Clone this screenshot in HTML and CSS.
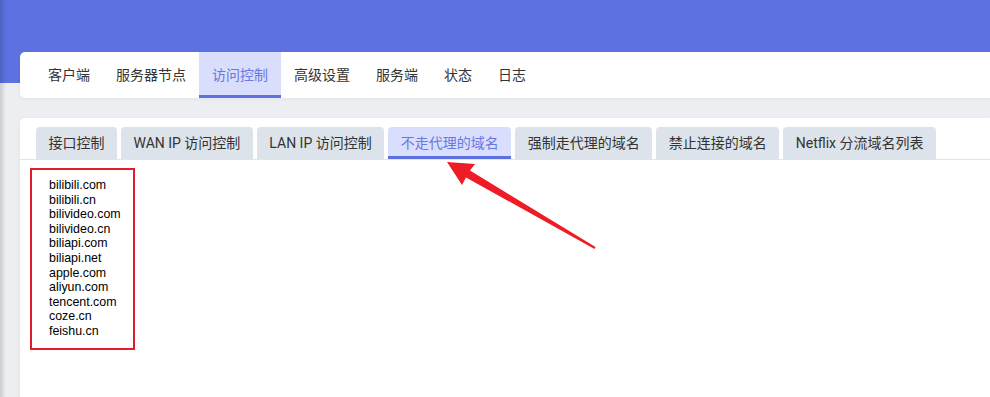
FILE: index.html
```html
<!DOCTYPE html>
<html lang="zh-CN">
<head>
    <meta charset="utf-8">
    <title>访问控制</title>
    <link rel="stylesheet" href="styles.css">
</head>
<body>
<div class="edge-shade"></div>
<div class="page">
    <nav class="card top-nav">
        <a class="nav-item">客户端</a>
        <a class="nav-item">服务器节点</a>
        <a class="nav-item active">访问控制</a>
        <a class="nav-item">高级设置</a>
        <a class="nav-item">服务端</a>
        <a class="nav-item">状态</a>
        <a class="nav-item">日志</a>
    </nav>
    <section class="card panel">
        <ul class="sub-tabs">
            <li class="sub-tab">接口控制</li>
            <li class="sub-tab">WAN IP 访问控制</li>
            <li class="sub-tab">LAN IP 访问控制</li>
            <li class="sub-tab active">不走代理的域名</li>
            <li class="sub-tab">强制走代理的域名</li>
            <li class="sub-tab">禁止连接的域名</li>
            <li class="sub-tab">Netflix 分流域名列表</li>
        </ul>
        <div class="domain-box">
            <div>bilibili.com</div>
            <div>bilibili.cn</div>
            <div>bilivideo.com</div>
            <div>bilivideo.cn</div>
            <div>biliapi.com</div>
            <div>biliapi.net</div>
            <div>apple.com</div>
            <div>aliyun.com</div>
            <div>tencent.com</div>
            <div>coze.cn</div>
            <div>feishu.cn</div>
        </div>
        <svg class="arrow" width="190" height="110" viewBox="0 0 190 110">
            <polygon points="27,12 55,14 50,20.5 175.5,97 174.5,99 46,27.5 42,35" fill="#ee1c25"/>
        </svg>
    </section>
</div>
</body>
</html>
```

FILE: styles.css
```css
*{margin: 0;padding: 0;box-sizing: border-box;}
html,body{height: 100%;overflow: hidden;}
body{
    background: linear-gradient(#5d72e0 0, #5d72e0 83px, #eceef1 83px);
    font-family: Roboto, "Noto Sans CJK SC", sans-serif;
    font-size: 14px;
    color: #333;
}
.edge-shade{position: fixed;left: 0;top: 0;bottom: 0;width: 6px;background: linear-gradient(to right, rgba(0,0,0,0.14), rgba(0,0,0,0));}
.page{padding: 52px 0 0 20px;}
.card{background: #fff;border-radius: 5px 0 0 5px;box-shadow: 0 1px 4px rgba(0,0,0,0.05);}

.top-nav{display: flex;height: 46px;padding: 0 15px;}
.nav-item{padding: 0 13px;line-height: 46px;color: #333;cursor: pointer;}
.nav-item.active{background: #d9defc;color: #6878e0;box-shadow: inset 0 -3px 0 #5d72e0;}

.panel{position: relative;margin-top: 20px;height: 320px;padding-top: 9px;}
.sub-tabs{display: flex;gap: 4px;list-style: none;padding-left: 16px;border-bottom: 1px solid #e1e3e6;}
.sub-tab{height: 32px;line-height: 32px;padding: 0 12.5px;background: #dde3ea;border-radius: 4px 4px 0 0;color: #333;}
.sub-tab.active{background: #d9defc;color: #6878e0;box-shadow: inset 0 -3px 0 #5d72e0;}

.domain-box{width: 105px;height: 182px;margin: 8px 0 0 10px;padding: 8px 0 0 17px;border: 2px solid #e21d2b;font-family: "Liberation Sans", Arial, sans-serif;font-size: 12.4px;line-height: 14.6px;color: #000;}
.arrow{position: absolute;left: 400px;top: 32px;}
```
